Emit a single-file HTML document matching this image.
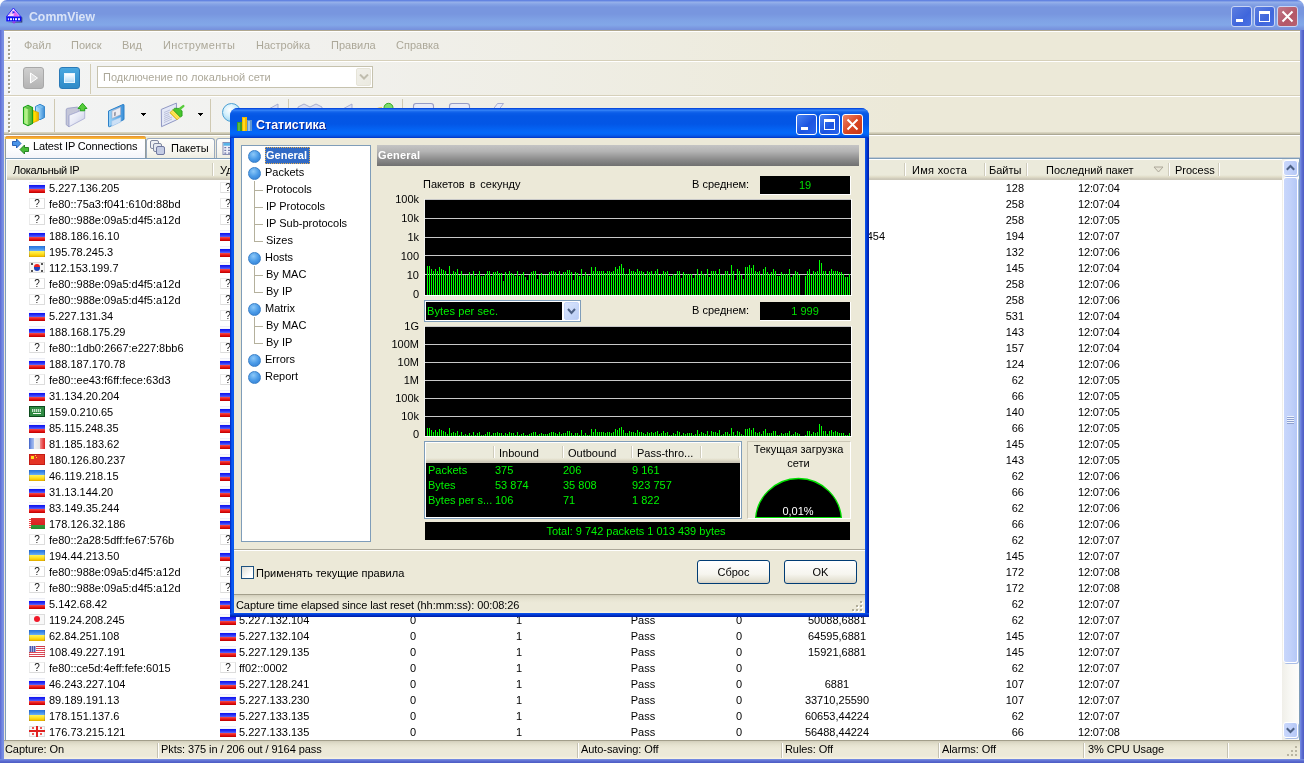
<!DOCTYPE html>
<html><head><meta charset="utf-8"><title>CommView</title>
<style>
*{box-sizing:border-box;margin:0;padding:0}
html,body{width:1304px;height:763px;overflow:hidden}
body{background:#fff;font-family:"Liberation Sans",sans-serif;font-size:11px;color:#000;position:relative}
.a{position:absolute}
i{font-style:normal}
/* main window */
#mtitle{left:0;top:0;width:1304px;height:30px;border-radius:7px 7px 0 0;background:linear-gradient(#5c7ee0 0,#6a8ae2 1px,#98b2ea 2px,#86a4e6 4px,#7896df 7px,#7896df 14px,#7fa2e5 20px,#82a7e8 25px,#7b97e0 28px,#7590dc 30px)}
#mbl{left:0;top:30px;width:4px;height:733px;background:linear-gradient(90deg,#5a68d2 0,#6476d8 1px,#7488e0 2px,#7b92e4 4px)}
#mbr{left:1300px;top:30px;width:4px;height:733px;background:linear-gradient(90deg,#7890e4 0,#6c80dc 1px,#5c6cd0 2px,#4c5cc4 4px)}
#mbb{left:0;top:759px;width:1304px;height:4px;background:linear-gradient(#7890e4 0,#6c80dc 1px,#5c6cd0 2px,#4c5cc4 4px)}
#mtext{left:29px;top:10px;font-weight:bold;font-size:13.5px;line-height:14px;color:#d9e3f7;transform:scaleX(.91);transform-origin:0 0;white-space:nowrap}
.wb{width:21px;height:21px;border-radius:3px;border:1px solid #c9d5f4}
.row{position:absolute;left:0;width:1281px;height:16px}
.row span{position:absolute;white-space:nowrap}
.row .t{top:1px;line-height:14px}
.row .c{text-align:center}
.row .r{text-align:right}
.f{display:block;position:relative;width:16px;height:11px;overflow:hidden}
.f b{display:block}
.f.q{background:#fff;border:1px solid #ebebeb;border-right-color:#dcdcdc;border-bottom-color:#dcdcdc;font-size:10px;line-height:9px;text-align:center;color:#111}
.g{color:#00f400}
.hd{position:absolute;top:164px;white-space:nowrap}
.hs{position:absolute;top:163px;width:2px;height:13px;border-left:1px solid #cfccbc;border-right:1px solid #fff}
.sb{position:absolute;top:743px;white-space:nowrap;letter-spacing:-.08px}
.ss{position:absolute;top:743px;width:2px;height:15px;border-left:1px solid #c5c2b2;border-right:1px solid #fff}
.mi{position:absolute;top:39px;color:#aca899;white-space:nowrap}
.ti{position:absolute;white-space:nowrap;line-height:13px}
.yl{position:absolute;width:40px;left:379px;text-align:right;line-height:12px}
.ball{width:13px;height:13px;border-radius:7px;border:1px solid #3a80c8;background:radial-gradient(circle at 40% 30%,#8cc8f8 0,#4c9ce8 50%,#2c78d0 100%)}
.btn{border:1px solid #003c74;border-radius:3px;background:linear-gradient(#fff 0,#f6f5ef 60%,#e4e1d2 90%,#d6d0c5 100%);text-align:center;line-height:22px}
.sbn{width:15px;border-radius:3px;border:1px solid #fff;box-shadow:1px 1px 0 #a9bde6;background:linear-gradient(90deg,#c9d7fb,#c1d1fa 50%,#b5c8f6)}
#w{position:absolute;left:0;top:0;width:1304px;height:763px;overflow:hidden;will-change:transform}
</style></head><body><div id="w">

<!-- ===== main window chrome ===== -->
<div class="a" style="left:4px;top:30px;width:1296px;height:729px;background:#ece9d8"></div>
<div class="a" id="mtitle"></div>
<div class="a" id="mbl"></div><div class="a" id="mbr"></div><div class="a" id="mbb"></div>
<div class="a" id="mtext">CommView</div>
<svg class="a" style="left:5px;top:7px" width="18" height="18" viewBox="0 0 18 18"><path d="M2.300 15.400h15v-5l-1-1v5.200z" fill="#101030" opacity=".7"/><path d="M8.400 1L1.300 9.800h14.700z" fill="#f6d8fa" stroke="#2424f4" stroke-width="1"/><path d="M9 3l5.500 6.600H8.500z" fill="#e468f2"/><path d="M4 8q2-3 5-1.500" stroke="#e0a0f0" stroke-width="1" fill="none"/><path d="M7.500 3.800l2.500 1.400-2.500 1.600z" fill="#2424f4"/><rect x="1.300" y="9.800" width="15.100" height="4.600" fill="#0c0cf4"/><g fill="#eef"><rect x="2.900" y="11.200" width="1" height="2"/><rect x="5" y="11.200" width="2" height="2"/><rect x="8" y="11.200" width="1" height="2"/><rect x="10" y="11.200" width="2" height="2"/><rect x="13" y="11.200" width="2" height="2"/></g><path d="M6.800 14.400h4.400l-2.200 2.300z" fill="#9a30e8"/></svg>
<div class="a wb" style="left:1231px;top:6px;background:linear-gradient(135deg,#5c7ee0,#3f66dc 60%,#4a72e4)"><div class="a" style="left:4px;top:12px;width:7px;height:3px;background:#fff"></div></div>
<div class="a wb" style="left:1254px;top:6px;background:linear-gradient(135deg,#5c7ee0,#3f66dc 60%,#4a72e4)"><div class="a" style="left:4px;top:4px;width:11px;height:11px;border:1px solid #fff;border-top-width:3px"></div></div>
<div class="a wb" style="left:1277px;top:6px;background:linear-gradient(135deg,#c07888,#b45868 60%,#b86070)"><svg class="a" style="left:3px;top:3px" width="13" height="13"><path d="M1.5 1.5l10 10M11.5 1.5l-10 10" stroke="#fff" stroke-width="2"/></svg></div>

<!-- menu bar -->
<div class="a" style="left:4px;top:30px;width:1296px;height:30px;background:linear-gradient(90deg,#f3f4f4 0,#f1f1ee 300px,#ece9d8 900px)"></div>
<div class="a" style="left:4px;top:30px;width:1296px;height:2px;background:linear-gradient(#b0a890 50%,#fff 50%)"></div>
<div class="a" style="left:4px;top:60px;width:1296px;height:2px;background:linear-gradient(#d6d0ba 50%,#fff 50%)"></div>
<div class="a" style="left:9px;top:38px;width:2px;height:22px;background:repeating-linear-gradient(#fff 0,#fff 2px,transparent 2px,transparent 4px)"></div><div class="a" style="left:8px;top:37px;width:2px;height:22px;background:repeating-linear-gradient(#a39f8b 0,#a39f8b 2px,transparent 2px,transparent 4px)"></div>
<span class="mi" style="left:24px">Файл</span><span class="mi" style="left:71px">Поиск</span><span class="mi" style="left:122px">Вид</span><span class="mi" style="left:163px;letter-spacing:.33px">Инструменты</span><span class="mi" style="left:256px">Настройка</span><span class="mi" style="left:331px">Правила</span><span class="mi" style="left:396px">Справка</span>

<!-- toolbar 1 -->
<div class="a" style="left:4px;top:62px;width:1296px;height:33px;background:linear-gradient(90deg,#f3f4f4 0,#f1f1ee 300px,#ece9d8 900px)"></div>
<div class="a" style="left:4px;top:95px;width:1296px;height:2px;background:linear-gradient(#d6d0ba 50%,#fff 50%)"></div>
<div class="a" style="left:9px;top:68px;width:2px;height:26px;background:repeating-linear-gradient(#fff 0,#fff 2px,transparent 2px,transparent 4px)"></div><div class="a" style="left:8px;top:67px;width:2px;height:26px;background:repeating-linear-gradient(#a39f8b 0,#a39f8b 2px,transparent 2px,transparent 4px)"></div>
<div class="a" style="left:23px;top:67px;width:21px;height:22px;border-radius:3px;border:1px solid #a8a8a8;background:linear-gradient(#cfcfcf,#b4b4b4)"><svg class="a" style="left:5px;top:4px" width="10" height="12"><path d="M1.5 1l7 5-7 5z" fill="#e0e0e0" stroke="#fff" stroke-width="1"/></svg></div>
<div class="a" style="left:59px;top:67px;width:21px;height:22px;border-radius:3px;border:1px solid #2a7ab8;background:linear-gradient(#4aa8e0,#2f8ac8)"><div class="a" style="left:4px;top:5px;width:11px;height:10px;background:linear-gradient(#fff,#b4dcf8);border:1px solid #e8f6ff"></div></div>
<div class="a" style="left:90px;top:64px;width:1px;height:30px;background:#d2ccb4"></div>
<div class="a" style="left:97px;top:66px;width:276px;height:22px;background:#fff;border:1px solid #c6c2ae"></div>
<span class="a" style="left:103px;top:71px;color:#aca899;white-space:nowrap">Подключение по локальной сети</span>
<div class="a" style="left:356px;top:68px;width:15px;height:18px;background:linear-gradient(135deg,#f1f0ea,#ebeae0);border:1px solid #e6e4d8;border-radius:2px"><svg class="a" style="left:2px;top:5px" width="10" height="7"><path d="M1 .5l4 4 4-4" stroke="#c0bdae" stroke-width="2" fill="none"/></svg></div>

<!-- toolbar 2 -->
<div class="a" style="left:4px;top:97px;width:1296px;height:35px;background:linear-gradient(90deg,#f3f4f4 0,#f1f1ee 300px,#ece9d8 900px)"></div>
<div class="a" style="left:4px;top:132px;width:1296px;height:4px;background:linear-gradient(#e0dcc8 0,#d0ccb8 1px,#c4c0aa 2px,#aca894 2px,#aca894 3px,#fff 3px)"></div>
<div class="a" style="left:9px;top:103px;width:2px;height:30px;background:repeating-linear-gradient(#fff 0,#fff 2px,transparent 2px,transparent 4px)"></div><div class="a" style="left:8px;top:102px;width:2px;height:30px;background:repeating-linear-gradient(#a39f8b 0,#a39f8b 2px,transparent 2px,transparent 4px)"></div>
<svg class="a" style="left:22px;top:103px" width="24" height="25" viewBox="0 0 24 25"><defs><linearGradient id="gg" x1="0" x2="1"><stop offset="0" stop-color="#a4ec78"/><stop offset=".42" stop-color="#b8f490"/><stop offset=".5" stop-color="#78cc54"/><stop offset="1" stop-color="#4cb038"/></linearGradient><linearGradient id="gb" x1="0" x2="1"><stop offset="0" stop-color="#b4e0fc"/><stop offset=".45" stop-color="#8cc8f4"/><stop offset="1" stop-color="#3c8cd4"/></linearGradient><linearGradient id="gy" x1="0" x2="1"><stop offset="0" stop-color="#fff000"/><stop offset=".4" stop-color="#ffd800"/><stop offset="1" stop-color="#e8a800"/></linearGradient></defs><path d="M13.500 3.500L18 1.300l4.500 2.200v11L18 16.700l-4.500-2.200z" fill="url(#gb)" stroke="#3888cc" stroke-width="1"/><path d="M14.500 4L18 5.500l3.500-1.500L18 2.300z" fill="#7cc0f0"/><path d="M11 7.500l5.500 2v8L11 19.700z" fill="url(#gy)" stroke="#e0a000" stroke-width=".8"/><path d="M1.500 4.500L6 2.300l4.500 2.200v16L6 22.700l-4.500-2.200z" fill="url(#gg)" stroke="#18a018" stroke-width="1.100"/><path d="M2.500 4.800L6 6.300l3.500-1.500L6 3.300z" fill="#5cc044"/></svg>
<div class="a" style="left:54px;top:99px;width:1px;height:33px;background:#cfc9b2"></div>
<svg class="a" style="left:65px;top:102px" width="24" height="27" viewBox="0 0 24 27"><defs><linearGradient id="gf" x1="0" y1="0" x2="1" y2="1"><stop offset="0" stop-color="#fdfdff"/><stop offset=".5" stop-color="#e8eaf6"/><stop offset="1" stop-color="#c0c4e0"/></linearGradient></defs><path d="M1.200 8Q1.200 6.500 2.700 6.300L12.300 5.100 14 6.500v3L4.100 13.300v11.600L1.200 22.700z" fill="#c4c6d8" stroke="#9ca0c6" stroke-width=".9"/><path d="M4.100 13.300L19.700 7.100v9.300L4.100 24.700z" fill="url(#gf)" stroke="#a6aad0" stroke-width=".8"/><path d="M17.500 1.200L22 6.500h-2.300v2.300h-4.400V6.500H13z" fill="#58cc3c" stroke="#18a010" stroke-width=".9"/></svg>
<svg class="a" style="left:107px;top:103px" width="19" height="25" viewBox="0 0 19 25"><defs><linearGradient id="gl" x1="0" x2="1"><stop offset="0" stop-color="#9cd4f8"/><stop offset=".5" stop-color="#6cb4ec"/><stop offset="1" stop-color="#3c90d8"/></linearGradient></defs><path d="M1.500 8L16 1.500Q17 1.200 17 2.200v14.300L2.500 23.700Q1.500 24 1.500 23z" fill="url(#gl)" stroke="#2c80c8" stroke-width="1"/><path d="M5 8l8.500-3.800v7.600L5 15.500z" fill="#ececf2" stroke="#a8a8c0" stroke-width=".6"/><path d="M7 9.500l1.800-.8v3.800L7 13.300z" fill="#9a9aa8"/><path d="M4.700 18l9.100-3.800V19l-9.100 4.300z" fill="#cce0f6" stroke="#9cc0e8" stroke-width=".5"/></svg>
<svg class="a" style="left:141px;top:113px" width="5" height="3" shape-rendering="crispEdges"><rect x="0" y="0" width="5" height="1"/><rect x="1" y="1" width="3" height="1"/><rect x="2" y="2" width="1" height="1"/></svg>
<svg class="a" style="left:160px;top:102px" width="26" height="26" viewBox="0 0 26 26"><path d="M1.300 7.400L16.400 1.100l.3 16.700L1.500 24.700z" fill="#e4e8f6" stroke="#9098c4" stroke-width="1"/><path d="M4 10.500l6-2.500M4 12.500l5-2M4 14.500l5-2M4 16.500l6-2.500M4 18.500l8-3.500M4 20.500l8-3.500" stroke="#b0b6d4" stroke-width=".8"/><path d="M9.800 10.700l3.300-3 7.200 7.400-3.300 2.700z" fill="#f8d830" stroke="#d0a010" stroke-width=".7"/><path d="M11.200 9.800l6.800 7M12.400 8.800l6.800 7" stroke="#fff8b0" stroke-width=".6"/><path d="M13.100 7.700l1.500-1.500 5.100.3 2.400 2.400v5.100l-1.800 1.100z" fill="#48c42c" stroke="#189810" stroke-width=".7"/><path d="M20.300 6.500l3-2.400" stroke="#58cc3c" stroke-width="2.400" stroke-linecap="round"/></svg>
<svg class="a" style="left:198px;top:113px" width="5" height="3" shape-rendering="crispEdges"><rect x="0" y="0" width="5" height="1"/><rect x="1" y="1" width="3" height="1"/><rect x="2" y="2" width="1" height="1"/></svg>
<div class="a" style="left:210px;top:99px;width:1px;height:33px;background:#cfc9b2"></div>
<div class="a" style="left:222px;top:103px;width:19px;height:19px;border-radius:10px;border:1.500px solid #4ca0d4;background:radial-gradient(circle at 40% 35%,#fff 0,#d4f0fc 40%,#7cc4ec 100%)"></div>
<svg class="a" style="left:262px;top:102px" width="250" height="10" viewBox="0 0 250 10"><g fill="#dcdff0" stroke="#a2a8cc" stroke-width=".9"><path d="M3 9l13-7v7z"/><path d="M36 5l6-3 6 3 6-3 6 3v5h-24z"/><path d="M77 9l13-7v7z"/><rect x="151.500" y="1.500" width="20" height="10" rx="2.500" fill="#e8eaf6" stroke="#969cc6" stroke-width="1.100"/><rect x="187.500" y="1.500" width="20" height="10" rx="2.500" fill="#e8eaf6" stroke="#969cc6" stroke-width="1.100"/><path d="M229.500 9.500l6-8h6l-6 8z" fill="#e8eaf6" stroke="#a0a6cc"/></g><circle cx="126.500" cy="5.800" r="4.500" fill="#7cdc6c" stroke="#38a828"/><path d="M110 10q4-5 10-5v5z" fill="#f0d060"/></svg>
<div class="a" style="left:288px;top:99px;width:1px;height:10px;background:#cfc9b2"></div>
<div class="a" style="left:402px;top:99px;width:1px;height:10px;background:#cfc9b2"></div>


<!-- tabs -->
<div class="a" style="left:5px;top:136px;width:141px;height:22px;background:linear-gradient(#fff,#fcfcfe 60%,#f4f4fa);border:1px solid #919b9c;border-bottom:none;border-radius:3px 3px 0 0"></div>
<div class="a" style="left:5px;top:136px;width:141px;height:3px;border-radius:3px 3px 0 0;background:linear-gradient(#e68b2c,#ffc73c)"></div>
<svg class="a" style="left:11px;top:138px" width="19" height="17" viewBox="0 0 19 17"><path d="M1.500 3.500h4v-2.500l4.500 4.500-4.500 4.500v-2.500h-4z" fill="#4a94e8" stroke="#1c56b0" stroke-width=".9"/><path d="M17.500 9.500h-4v-2.500l-4.500 4.500 4.500 4.500v-2.500h4z" fill="#48bc38" stroke="#1c7c18" stroke-width=".9"/></svg>
<span class="a" style="left:33px;top:140px;white-space:nowrap;letter-spacing:-.15px">Latest IP Connections</span>
<div class="a" style="left:146px;top:138px;width:69px;height:20px;background:linear-gradient(#fdfdfb,#f6f5ee 70%,#eeede2);border:1px solid #9aaabf;border-bottom:none;border-radius:3px 3px 0 0"></div>
<svg class="a" style="left:150px;top:140px" width="16" height="16" viewBox="0 0 16 16"><rect x=".5" y=".5" width="8" height="8" rx="1.5" fill="#eef0f4" stroke="#8088a0"/><rect x="3.5" y="3.5" width="8" height="8" rx="1.5" fill="#e4e8f0" stroke="#8088a0"/><rect x="6.5" y="6.5" width="8" height="8" rx="1.5" fill="#c4cce4" stroke="#7078a0"/></svg>
<span class="a" style="left:171px;top:142px;white-space:nowrap">Пакеты</span>
<div class="a" style="left:216px;top:138px;width:69px;height:20px;background:linear-gradient(#fdfdfb,#f6f5ee 70%,#eeede2);border:1px solid #9aaabf;border-bottom:none;border-radius:3px 3px 0 0"></div>
<svg class="a" style="left:222px;top:142px" width="14" height="13" viewBox="0 0 14 14"><rect x=".5" y=".5" width="13" height="13" fill="#eceef8" stroke="#8088b0"/><rect x="1" y="1" width="12" height="3" fill="#58b4e8"/><path d="M2 6h2M6 6h2M10 6h2M2 9h2M6 9h2M10 9h2M2 12h2M6 12h2" stroke="#7078a8" stroke-width="1.4"/></svg>


<!-- list -->
<div class="a" style="left:285px;top:157px;width:1015px;height:1px;background:#c2cad0"></div>
<div class="a" style="left:5px;top:158px;width:1295px;height:583px;background:#fff;border:1px solid #7f9db9"></div>
<div class="a" style="left:7px;top:160px;width:1275px;height:20px;background:linear-gradient(#ebeadb 0,#ebeadb 15px,#e0dcc8 17px,#cbc7b8 19px,#cbc7b8 20px)"></div>
<span class="hd" style="left:13px;letter-spacing:-.33px">Локальный IP</span><i class="hs" style="left:212px"></i>
<span class="hd" style="left:220px">Удаленный IP</span>
<i class="hs" style="left:904px"></i><span class="hd" style="left:912px;letter-spacing:.3px">Имя хоста</span>
<i class="hs" style="left:984px"></i><span class="hd" style="left:989px">Байты</span>
<i class="hs" style="left:1026px"></i><span class="hd" style="left:1046px">Последний пакет</span>
<svg class="a" style="left:1153px;top:166px" width="11" height="7"><path d="M1 1h9l-4.5 5z" fill="#e6e3d4" stroke="#aca899"/></svg>
<i class="hs" style="left:1168px"></i><span class="hd" style="left:1175px">Process</span><i class="hs" style="left:1218px"></i>
<div class="row" style="top:180px"><span style="left:29px;top:2px"><i class="f" style="background:linear-gradient(#dfe2f0 0,#fdfdff 1px,#f2f2fa 3px,#0c10f0 3px,#2830f4 5px,#5c66f8 7px,#f25050 7px,#e81818 9px,#d80808 10px,#b80000 11px)"></i></span><span class="t" style="left:49px">5.227.136.205</span><span style="left:220px;top:2px"><i class="f q">?</i></span><span class="t r" style="left:984px;width:40px">128</span><span class="t" style="left:1078px;letter-spacing:-.15px">12:07:04</span></div>
<div class="row" style="top:196px"><span style="left:29px;top:2px"><i class="f q">?</i></span><span class="t" style="left:49px">fe80::75a3:f041:610d:88bd</span><span style="left:220px;top:2px"><i class="f q">?</i></span><span class="t r" style="left:984px;width:40px">258</span><span class="t" style="left:1078px;letter-spacing:-.15px">12:07:04</span></div>
<div class="row" style="top:212px"><span style="left:29px;top:2px"><i class="f q">?</i></span><span class="t" style="left:49px">fe80::988e:09a5:d4f5:a12d</span><span style="left:220px;top:2px"><i class="f q">?</i></span><span class="t r" style="left:984px;width:40px">258</span><span class="t" style="left:1078px;letter-spacing:-.15px">12:07:05</span></div>
<div class="row" style="top:228px"><span style="left:29px;top:2px"><i class="f" style="background:linear-gradient(#dfe2f0 0,#fdfdff 1px,#f2f2fa 3px,#0c10f0 3px,#2830f4 5px,#5c66f8 7px,#f25050 7px,#e81818 9px,#d80808 10px,#b80000 11px)"></i></span><span class="t" style="left:49px">188.186.16.10</span><span style="left:220px;top:2px"><i class="f" style="background:linear-gradient(#dfe2f0 0,#fdfdff 1px,#f2f2fa 3px,#0c10f0 3px,#2830f4 5px,#5c66f8 7px,#f25050 7px,#e81818 9px,#d80808 10px,#b80000 11px)"></i></span><span class="t r" style="left:984px;width:40px">194</span><span class="t" style="left:1078px;letter-spacing:-.15px">12:07:07</span><span class="t r" style="left:765px;width:120px">6881,50321,61454</span></div>
<div class="row" style="top:244px"><span style="left:29px;top:2px"><i class="f" style="background:linear-gradient(#2a74dc 0,#3a88e8 2px,#6cb0f4 5px,#fff460 5px,#ffe020 8px,#f4c400 10px,#d8a400 11px);box-shadow:inset 1px 0 0 rgba(0,0,80,.15),inset -1px 0 0 rgba(0,0,80,.15)"></i></span><span class="t" style="left:49px">195.78.245.3</span><span style="left:220px;top:2px"><i class="f" style="background:linear-gradient(#dfe2f0 0,#fdfdff 1px,#f2f2fa 3px,#0c10f0 3px,#2830f4 5px,#5c66f8 7px,#f25050 7px,#e81818 9px,#d80808 10px,#b80000 11px)"></i></span><span class="t r" style="left:984px;width:40px">132</span><span class="t" style="left:1078px;letter-spacing:-.15px">12:07:06</span></div>
<div class="row" style="top:260px"><span style="left:29px;top:2px"><i class="f" style="background:#f6f6f6;box-shadow:inset 0 0 0 1px #dcdcdc"><b style="position:absolute;left:5px;top:2px;width:6px;height:7px;border-radius:3px;background:linear-gradient(#e22 50%,#24b 50%)"></b><b style="position:absolute;left:2px;top:1px;width:2px;height:2px;background:#555"></b><b style="position:absolute;left:12px;top:1px;width:2px;height:2px;background:#555"></b><b style="position:absolute;left:2px;top:8px;width:2px;height:2px;background:#555"></b><b style="position:absolute;left:12px;top:8px;width:2px;height:2px;background:#555"></b></i></span><span class="t" style="left:49px">112.153.199.7</span><span style="left:220px;top:2px"><i class="f" style="background:linear-gradient(#dfe2f0 0,#fdfdff 1px,#f2f2fa 3px,#0c10f0 3px,#2830f4 5px,#5c66f8 7px,#f25050 7px,#e81818 9px,#d80808 10px,#b80000 11px)"></i></span><span class="t r" style="left:984px;width:40px">145</span><span class="t" style="left:1078px;letter-spacing:-.15px">12:07:04</span></div>
<div class="row" style="top:276px"><span style="left:29px;top:2px"><i class="f q">?</i></span><span class="t" style="left:49px">fe80::988e:09a5:d4f5:a12d</span><span style="left:220px;top:2px"><i class="f q">?</i></span><span class="t r" style="left:984px;width:40px">258</span><span class="t" style="left:1078px;letter-spacing:-.15px">12:07:06</span></div>
<div class="row" style="top:292px"><span style="left:29px;top:2px"><i class="f q">?</i></span><span class="t" style="left:49px">fe80::988e:09a5:d4f5:a12d</span><span style="left:220px;top:2px"><i class="f q">?</i></span><span class="t r" style="left:984px;width:40px">258</span><span class="t" style="left:1078px;letter-spacing:-.15px">12:07:06</span></div>
<div class="row" style="top:308px"><span style="left:29px;top:2px"><i class="f" style="background:linear-gradient(#dfe2f0 0,#fdfdff 1px,#f2f2fa 3px,#0c10f0 3px,#2830f4 5px,#5c66f8 7px,#f25050 7px,#e81818 9px,#d80808 10px,#b80000 11px)"></i></span><span class="t" style="left:49px">5.227.131.34</span><span style="left:220px;top:2px"><i class="f q">?</i></span><span class="t r" style="left:984px;width:40px">531</span><span class="t" style="left:1078px;letter-spacing:-.15px">12:07:04</span></div>
<div class="row" style="top:324px"><span style="left:29px;top:2px"><i class="f" style="background:linear-gradient(#dfe2f0 0,#fdfdff 1px,#f2f2fa 3px,#0c10f0 3px,#2830f4 5px,#5c66f8 7px,#f25050 7px,#e81818 9px,#d80808 10px,#b80000 11px)"></i></span><span class="t" style="left:49px">188.168.175.29</span><span style="left:220px;top:2px"><i class="f" style="background:linear-gradient(#dfe2f0 0,#fdfdff 1px,#f2f2fa 3px,#0c10f0 3px,#2830f4 5px,#5c66f8 7px,#f25050 7px,#e81818 9px,#d80808 10px,#b80000 11px)"></i></span><span class="t r" style="left:984px;width:40px">143</span><span class="t" style="left:1078px;letter-spacing:-.15px">12:07:04</span></div>
<div class="row" style="top:340px"><span style="left:29px;top:2px"><i class="f q">?</i></span><span class="t" style="left:49px">fe80::1db0:2667:e227:8bb6</span><span style="left:220px;top:2px"><i class="f q">?</i></span><span class="t r" style="left:984px;width:40px">157</span><span class="t" style="left:1078px;letter-spacing:-.15px">12:07:04</span></div>
<div class="row" style="top:356px"><span style="left:29px;top:2px"><i class="f" style="background:linear-gradient(#dfe2f0 0,#fdfdff 1px,#f2f2fa 3px,#0c10f0 3px,#2830f4 5px,#5c66f8 7px,#f25050 7px,#e81818 9px,#d80808 10px,#b80000 11px)"></i></span><span class="t" style="left:49px">188.187.170.78</span><span style="left:220px;top:2px"><i class="f" style="background:linear-gradient(#dfe2f0 0,#fdfdff 1px,#f2f2fa 3px,#0c10f0 3px,#2830f4 5px,#5c66f8 7px,#f25050 7px,#e81818 9px,#d80808 10px,#b80000 11px)"></i></span><span class="t r" style="left:984px;width:40px">124</span><span class="t" style="left:1078px;letter-spacing:-.15px">12:07:06</span></div>
<div class="row" style="top:372px"><span style="left:29px;top:2px"><i class="f q">?</i></span><span class="t" style="left:49px">fe80::ee43:f6ff:fece:63d3</span><span style="left:220px;top:2px"><i class="f q">?</i></span><span class="t r" style="left:984px;width:40px">62</span><span class="t" style="left:1078px;letter-spacing:-.15px">12:07:05</span></div>
<div class="row" style="top:388px"><span style="left:29px;top:2px"><i class="f" style="background:linear-gradient(#dfe2f0 0,#fdfdff 1px,#f2f2fa 3px,#0c10f0 3px,#2830f4 5px,#5c66f8 7px,#f25050 7px,#e81818 9px,#d80808 10px,#b80000 11px)"></i></span><span class="t" style="left:49px">31.134.20.204</span><span style="left:220px;top:2px"><i class="f" style="background:linear-gradient(#dfe2f0 0,#fdfdff 1px,#f2f2fa 3px,#0c10f0 3px,#2830f4 5px,#5c66f8 7px,#f25050 7px,#e81818 9px,#d80808 10px,#b80000 11px)"></i></span><span class="t r" style="left:984px;width:40px">66</span><span class="t" style="left:1078px;letter-spacing:-.15px">12:07:05</span></div>
<div class="row" style="top:404px"><span style="left:29px;top:2px"><i class="f" style="background:#2f8a42;box-shadow:inset 0 0 0 1px #0c4a1c"><b style="position:absolute;left:3px;top:3px;width:9px;height:3px;background:repeating-linear-gradient(90deg,#d4ecd8 0,#d4ecd8 1px,#6aaa78 1px,#6aaa78 2px);opacity:.9"></b><b style="position:absolute;left:4px;top:7px;width:8px;height:1px;background:#f0f8f0"></b></i></span><span class="t" style="left:49px">159.0.210.65</span><span style="left:220px;top:2px"><i class="f" style="background:linear-gradient(#dfe2f0 0,#fdfdff 1px,#f2f2fa 3px,#0c10f0 3px,#2830f4 5px,#5c66f8 7px,#f25050 7px,#e81818 9px,#d80808 10px,#b80000 11px)"></i></span><span class="t r" style="left:984px;width:40px">140</span><span class="t" style="left:1078px;letter-spacing:-.15px">12:07:05</span></div>
<div class="row" style="top:420px"><span style="left:29px;top:2px"><i class="f" style="background:linear-gradient(#dfe2f0 0,#fdfdff 1px,#f2f2fa 3px,#0c10f0 3px,#2830f4 5px,#5c66f8 7px,#f25050 7px,#e81818 9px,#d80808 10px,#b80000 11px)"></i></span><span class="t" style="left:49px">85.115.248.35</span><span style="left:220px;top:2px"><i class="f" style="background:linear-gradient(#dfe2f0 0,#fdfdff 1px,#f2f2fa 3px,#0c10f0 3px,#2830f4 5px,#5c66f8 7px,#f25050 7px,#e81818 9px,#d80808 10px,#b80000 11px)"></i></span><span class="t r" style="left:984px;width:40px">66</span><span class="t" style="left:1078px;letter-spacing:-.15px">12:07:05</span></div>
<div class="row" style="top:436px"><span style="left:29px;top:2px"><i class="f" style="background:linear-gradient(90deg,#3a5cc4 0,#7c9ce4 2px,#a8c0f0 5px,#f0f0f0 5px,#e2e2e2 11px,#f09090 11px,#e84848 14px,#d82020 16px)"></i></span><span class="t" style="left:49px">81.185.183.62</span><span style="left:220px;top:2px"><i class="f" style="background:linear-gradient(#dfe2f0 0,#fdfdff 1px,#f2f2fa 3px,#0c10f0 3px,#2830f4 5px,#5c66f8 7px,#f25050 7px,#e81818 9px,#d80808 10px,#b80000 11px)"></i></span><span class="t r" style="left:984px;width:40px">145</span><span class="t" style="left:1078px;letter-spacing:-.15px">12:07:05</span></div>
<div class="row" style="top:452px"><span style="left:29px;top:2px"><i class="f" style="background:#e43424;box-shadow:inset 0 0 0 1px #c41c14"><b style="position:absolute;left:2px;top:2px;width:3px;height:3px;background:#ffe020"></b><b style="position:absolute;left:6px;top:1px;width:1px;height:1px;background:#ffe020"></b><b style="position:absolute;left:7px;top:3px;width:1px;height:1px;background:#ffe020"></b></i></span><span class="t" style="left:49px">180.126.80.237</span><span style="left:220px;top:2px"><i class="f" style="background:linear-gradient(#dfe2f0 0,#fdfdff 1px,#f2f2fa 3px,#0c10f0 3px,#2830f4 5px,#5c66f8 7px,#f25050 7px,#e81818 9px,#d80808 10px,#b80000 11px)"></i></span><span class="t r" style="left:984px;width:40px">143</span><span class="t" style="left:1078px;letter-spacing:-.15px">12:07:05</span></div>
<div class="row" style="top:468px"><span style="left:29px;top:2px"><i class="f" style="background:linear-gradient(#2a74dc 0,#3a88e8 2px,#6cb0f4 5px,#fff460 5px,#ffe020 8px,#f4c400 10px,#d8a400 11px);box-shadow:inset 1px 0 0 rgba(0,0,80,.15),inset -1px 0 0 rgba(0,0,80,.15)"></i></span><span class="t" style="left:49px">46.119.218.15</span><span style="left:220px;top:2px"><i class="f" style="background:linear-gradient(#dfe2f0 0,#fdfdff 1px,#f2f2fa 3px,#0c10f0 3px,#2830f4 5px,#5c66f8 7px,#f25050 7px,#e81818 9px,#d80808 10px,#b80000 11px)"></i></span><span class="t r" style="left:984px;width:40px">62</span><span class="t" style="left:1078px;letter-spacing:-.15px">12:07:06</span></div>
<div class="row" style="top:484px"><span style="left:29px;top:2px"><i class="f" style="background:linear-gradient(#dfe2f0 0,#fdfdff 1px,#f2f2fa 3px,#0c10f0 3px,#2830f4 5px,#5c66f8 7px,#f25050 7px,#e81818 9px,#d80808 10px,#b80000 11px)"></i></span><span class="t" style="left:49px">31.13.144.20</span><span style="left:220px;top:2px"><i class="f" style="background:linear-gradient(#dfe2f0 0,#fdfdff 1px,#f2f2fa 3px,#0c10f0 3px,#2830f4 5px,#5c66f8 7px,#f25050 7px,#e81818 9px,#d80808 10px,#b80000 11px)"></i></span><span class="t r" style="left:984px;width:40px">66</span><span class="t" style="left:1078px;letter-spacing:-.15px">12:07:06</span></div>
<div class="row" style="top:500px"><span style="left:29px;top:2px"><i class="f" style="background:linear-gradient(#dfe2f0 0,#fdfdff 1px,#f2f2fa 3px,#0c10f0 3px,#2830f4 5px,#5c66f8 7px,#f25050 7px,#e81818 9px,#d80808 10px,#b80000 11px)"></i></span><span class="t" style="left:49px">83.149.35.244</span><span style="left:220px;top:2px"><i class="f" style="background:linear-gradient(#dfe2f0 0,#fdfdff 1px,#f2f2fa 3px,#0c10f0 3px,#2830f4 5px,#5c66f8 7px,#f25050 7px,#e81818 9px,#d80808 10px,#b80000 11px)"></i></span><span class="t r" style="left:984px;width:40px">62</span><span class="t" style="left:1078px;letter-spacing:-.15px">12:07:06</span></div>
<div class="row" style="top:516px"><span style="left:29px;top:2px"><i class="f" style="background:linear-gradient(#e03030 0,#d82020 7px,#2f9a3a 7px,#258a30 11px)"><b style="position:absolute;left:0;top:0;width:2px;height:11px;background:repeating-linear-gradient(#fff 0,#fff 1px,#e44 1px,#e44 2px)"></b></i></span><span class="t" style="left:49px">178.126.32.186</span><span style="left:220px;top:2px"><i class="f" style="background:linear-gradient(#dfe2f0 0,#fdfdff 1px,#f2f2fa 3px,#0c10f0 3px,#2830f4 5px,#5c66f8 7px,#f25050 7px,#e81818 9px,#d80808 10px,#b80000 11px)"></i></span><span class="t r" style="left:984px;width:40px">66</span><span class="t" style="left:1078px;letter-spacing:-.15px">12:07:06</span></div>
<div class="row" style="top:532px"><span style="left:29px;top:2px"><i class="f q">?</i></span><span class="t" style="left:49px">fe80::2a28:5dff:fe67:576b</span><span style="left:220px;top:2px"><i class="f q">?</i></span><span class="t r" style="left:984px;width:40px">62</span><span class="t" style="left:1078px;letter-spacing:-.15px">12:07:07</span></div>
<div class="row" style="top:548px"><span style="left:29px;top:2px"><i class="f" style="background:linear-gradient(#2a74dc 0,#3a88e8 2px,#6cb0f4 5px,#fff460 5px,#ffe020 8px,#f4c400 10px,#d8a400 11px);box-shadow:inset 1px 0 0 rgba(0,0,80,.15),inset -1px 0 0 rgba(0,0,80,.15)"></i></span><span class="t" style="left:49px">194.44.213.50</span><span style="left:220px;top:2px"><i class="f" style="background:linear-gradient(#dfe2f0 0,#fdfdff 1px,#f2f2fa 3px,#0c10f0 3px,#2830f4 5px,#5c66f8 7px,#f25050 7px,#e81818 9px,#d80808 10px,#b80000 11px)"></i></span><span class="t r" style="left:984px;width:40px">145</span><span class="t" style="left:1078px;letter-spacing:-.15px">12:07:07</span></div>
<div class="row" style="top:564px"><span style="left:29px;top:2px"><i class="f q">?</i></span><span class="t" style="left:49px">fe80::988e:09a5:d4f5:a12d</span><span style="left:220px;top:2px"><i class="f q">?</i></span><span class="t r" style="left:984px;width:40px">172</span><span class="t" style="left:1078px;letter-spacing:-.15px">12:07:08</span></div>
<div class="row" style="top:580px"><span style="left:29px;top:2px"><i class="f q">?</i></span><span class="t" style="left:49px">fe80::988e:09a5:d4f5:a12d</span><span style="left:220px;top:2px"><i class="f q">?</i></span><span class="t r" style="left:984px;width:40px">172</span><span class="t" style="left:1078px;letter-spacing:-.15px">12:07:08</span></div>
<div class="row" style="top:596px"><span style="left:29px;top:2px"><i class="f" style="background:linear-gradient(#dfe2f0 0,#fdfdff 1px,#f2f2fa 3px,#0c10f0 3px,#2830f4 5px,#5c66f8 7px,#f25050 7px,#e81818 9px,#d80808 10px,#b80000 11px)"></i></span><span class="t" style="left:49px">5.142.68.42</span><span style="left:220px;top:2px"><i class="f" style="background:linear-gradient(#dfe2f0 0,#fdfdff 1px,#f2f2fa 3px,#0c10f0 3px,#2830f4 5px,#5c66f8 7px,#f25050 7px,#e81818 9px,#d80808 10px,#b80000 11px)"></i></span><span class="t r" style="left:984px;width:40px">62</span><span class="t" style="left:1078px;letter-spacing:-.15px">12:07:07</span></div>
<div class="row" style="top:612px"><span style="left:29px;top:2px"><i class="f" style="background:#f8f8f8;box-shadow:inset 0 0 0 1px #dcdcdc"><b style="position:absolute;left:5px;top:2px;width:6px;height:6px;border-radius:3px;background:#f01828"></b></i></span><span class="t" style="left:49px">119.24.208.245</span><span style="left:220px;top:2px"><i class="f" style="background:linear-gradient(#dfe2f0 0,#fdfdff 1px,#f2f2fa 3px,#0c10f0 3px,#2830f4 5px,#5c66f8 7px,#f25050 7px,#e81818 9px,#d80808 10px,#b80000 11px)"></i></span><span class="t" style="left:239px">5.227.132.104</span><span class="t c" style="left:383px;width:60px">0</span><span class="t c" style="left:489px;width:60px">1</span><span class="t c" style="left:613px;width:60px">Pass</span><span class="t c" style="left:709px;width:60px">0</span><span class="t c" style="left:777px;width:120px">50088,6881</span><span class="t r" style="left:984px;width:40px">62</span><span class="t" style="left:1078px;letter-spacing:-.15px">12:07:07</span></div>
<div class="row" style="top:628px"><span style="left:29px;top:2px"><i class="f" style="background:linear-gradient(#2a74dc 0,#3a88e8 2px,#6cb0f4 5px,#fff460 5px,#ffe020 8px,#f4c400 10px,#d8a400 11px);box-shadow:inset 1px 0 0 rgba(0,0,80,.15),inset -1px 0 0 rgba(0,0,80,.15)"></i></span><span class="t" style="left:49px">62.84.251.108</span><span style="left:220px;top:2px"><i class="f" style="background:linear-gradient(#dfe2f0 0,#fdfdff 1px,#f2f2fa 3px,#0c10f0 3px,#2830f4 5px,#5c66f8 7px,#f25050 7px,#e81818 9px,#d80808 10px,#b80000 11px)"></i></span><span class="t" style="left:239px">5.227.132.104</span><span class="t c" style="left:383px;width:60px">0</span><span class="t c" style="left:489px;width:60px">1</span><span class="t c" style="left:613px;width:60px">Pass</span><span class="t c" style="left:709px;width:60px">0</span><span class="t c" style="left:777px;width:120px">64595,6881</span><span class="t r" style="left:984px;width:40px">145</span><span class="t" style="left:1078px;letter-spacing:-.15px">12:07:07</span></div>
<div class="row" style="top:644px"><span style="left:29px;top:2px"><i class="f" style="background:repeating-linear-gradient(#e04858 0,#e04858 1px,#fff 1px,#fff 2px);box-shadow:inset 0 0 0 1px rgba(120,0,0,.2)"><b style="position:absolute;left:0;top:0;width:7px;height:6px;background:#4858b0;background-image:repeating-linear-gradient(90deg,rgba(255,255,255,.5) 0,rgba(255,255,255,.5) 1px,transparent 1px,transparent 2px)"></b></i></span><span class="t" style="left:49px">108.49.227.191</span><span style="left:220px;top:2px"><i class="f" style="background:linear-gradient(#dfe2f0 0,#fdfdff 1px,#f2f2fa 3px,#0c10f0 3px,#2830f4 5px,#5c66f8 7px,#f25050 7px,#e81818 9px,#d80808 10px,#b80000 11px)"></i></span><span class="t" style="left:239px">5.227.129.135</span><span class="t c" style="left:383px;width:60px">0</span><span class="t c" style="left:489px;width:60px">1</span><span class="t c" style="left:613px;width:60px">Pass</span><span class="t c" style="left:709px;width:60px">0</span><span class="t c" style="left:777px;width:120px">15921,6881</span><span class="t r" style="left:984px;width:40px">145</span><span class="t" style="left:1078px;letter-spacing:-.15px">12:07:07</span></div>
<div class="row" style="top:660px"><span style="left:29px;top:2px"><i class="f q">?</i></span><span class="t" style="left:49px">fe80::ce5d:4eff:fefe:6015</span><span style="left:220px;top:2px"><i class="f q">?</i></span><span class="t" style="left:239px">ff02::0002</span><span class="t c" style="left:383px;width:60px">0</span><span class="t c" style="left:489px;width:60px">1</span><span class="t c" style="left:613px;width:60px">Pass</span><span class="t c" style="left:709px;width:60px">0</span><span class="t c" style="left:777px;width:120px"></span><span class="t r" style="left:984px;width:40px">62</span><span class="t" style="left:1078px;letter-spacing:-.15px">12:07:07</span></div>
<div class="row" style="top:676px"><span style="left:29px;top:2px"><i class="f" style="background:linear-gradient(#dfe2f0 0,#fdfdff 1px,#f2f2fa 3px,#0c10f0 3px,#2830f4 5px,#5c66f8 7px,#f25050 7px,#e81818 9px,#d80808 10px,#b80000 11px)"></i></span><span class="t" style="left:49px">46.243.227.104</span><span style="left:220px;top:2px"><i class="f" style="background:linear-gradient(#dfe2f0 0,#fdfdff 1px,#f2f2fa 3px,#0c10f0 3px,#2830f4 5px,#5c66f8 7px,#f25050 7px,#e81818 9px,#d80808 10px,#b80000 11px)"></i></span><span class="t" style="left:239px">5.227.128.241</span><span class="t c" style="left:383px;width:60px">0</span><span class="t c" style="left:489px;width:60px">1</span><span class="t c" style="left:613px;width:60px">Pass</span><span class="t c" style="left:709px;width:60px">0</span><span class="t c" style="left:777px;width:120px">6881</span><span class="t r" style="left:984px;width:40px">107</span><span class="t" style="left:1078px;letter-spacing:-.15px">12:07:07</span></div>
<div class="row" style="top:692px"><span style="left:29px;top:2px"><i class="f" style="background:linear-gradient(#dfe2f0 0,#fdfdff 1px,#f2f2fa 3px,#0c10f0 3px,#2830f4 5px,#5c66f8 7px,#f25050 7px,#e81818 9px,#d80808 10px,#b80000 11px)"></i></span><span class="t" style="left:49px">89.189.191.13</span><span style="left:220px;top:2px"><i class="f" style="background:linear-gradient(#dfe2f0 0,#fdfdff 1px,#f2f2fa 3px,#0c10f0 3px,#2830f4 5px,#5c66f8 7px,#f25050 7px,#e81818 9px,#d80808 10px,#b80000 11px)"></i></span><span class="t" style="left:239px">5.227.133.230</span><span class="t c" style="left:383px;width:60px">0</span><span class="t c" style="left:489px;width:60px">1</span><span class="t c" style="left:613px;width:60px">Pass</span><span class="t c" style="left:709px;width:60px">0</span><span class="t c" style="left:777px;width:120px">33710,25590</span><span class="t r" style="left:984px;width:40px">107</span><span class="t" style="left:1078px;letter-spacing:-.15px">12:07:07</span></div>
<div class="row" style="top:708px"><span style="left:29px;top:2px"><i class="f" style="background:linear-gradient(#2a74dc 0,#3a88e8 2px,#6cb0f4 5px,#fff460 5px,#ffe020 8px,#f4c400 10px,#d8a400 11px);box-shadow:inset 1px 0 0 rgba(0,0,80,.15),inset -1px 0 0 rgba(0,0,80,.15)"></i></span><span class="t" style="left:49px">178.151.137.6</span><span style="left:220px;top:2px"><i class="f" style="background:linear-gradient(#dfe2f0 0,#fdfdff 1px,#f2f2fa 3px,#0c10f0 3px,#2830f4 5px,#5c66f8 7px,#f25050 7px,#e81818 9px,#d80808 10px,#b80000 11px)"></i></span><span class="t" style="left:239px">5.227.133.135</span><span class="t c" style="left:383px;width:60px">0</span><span class="t c" style="left:489px;width:60px">1</span><span class="t c" style="left:613px;width:60px">Pass</span><span class="t c" style="left:709px;width:60px">0</span><span class="t c" style="left:777px;width:120px">60653,44224</span><span class="t r" style="left:984px;width:40px">62</span><span class="t" style="left:1078px;letter-spacing:-.15px">12:07:07</span></div>
<div class="row" style="top:724px"><span style="left:29px;top:2px"><i class="f" style="background:#fafafa;box-shadow:inset 0 0 0 1px #dedede"><b style="position:absolute;left:7px;top:0;width:2px;height:11px;background:#e02020"></b><b style="position:absolute;left:0;top:4px;width:16px;height:2px;background:#e02020"></b><b style="position:absolute;left:3px;top:1px;width:2px;height:2px;background:#e55"></b><b style="position:absolute;left:11px;top:1px;width:2px;height:2px;background:#e55"></b><b style="position:absolute;left:3px;top:7px;width:2px;height:2px;background:#e55"></b><b style="position:absolute;left:11px;top:7px;width:2px;height:2px;background:#e55"></b></i></span><span class="t" style="left:49px">176.73.215.121</span><span style="left:220px;top:2px"><i class="f" style="background:linear-gradient(#dfe2f0 0,#fdfdff 1px,#f2f2fa 3px,#0c10f0 3px,#2830f4 5px,#5c66f8 7px,#f25050 7px,#e81818 9px,#d80808 10px,#b80000 11px)"></i></span><span class="t" style="left:239px">5.227.133.135</span><span class="t c" style="left:383px;width:60px">0</span><span class="t c" style="left:489px;width:60px">1</span><span class="t c" style="left:613px;width:60px">Pass</span><span class="t c" style="left:709px;width:60px">0</span><span class="t c" style="left:777px;width:120px">56488,44224</span><span class="t r" style="left:984px;width:40px">66</span><span class="t" style="left:1078px;letter-spacing:-.15px">12:07:08</span></div>
<!-- scrollbar -->
<div class="a" style="left:1282px;top:159px;width:17px;height:581px;background:linear-gradient(90deg,#f0efe9,#f8f8f4 50%,#fdfdfb)"></div>
<div class="a sbn" style="left:1283px;top:160px;height:16px"><svg class="a" style="left:2px;top:3px" width="9" height="7"><path d="M.8 5.800l3.700-3.800 3.700 3.800" stroke="#4d6185" stroke-width="2" fill="none"/></svg></div>
<div class="a sbn" style="left:1283px;top:722px;height:16px"><svg class="a" style="left:2px;top:4px" width="9" height="7"><path d="M.8 1.200l3.700 3.800 3.700-3.800" stroke="#4d6185" stroke-width="2" fill="none"/></svg></div>
<div class="a sbn" style="left:1283px;top:177px;height:486px"></div>
<div class="a" style="left:1287px;top:416px;width:7px;height:8px;background:repeating-linear-gradient(#eef4fe 0,#eef4fe 1px,#8ea0d0 1px,#8ea0d0 2px)"></div>


<!-- status bar -->
<div class="a" style="left:4px;top:740px;width:1296px;height:19px;background:linear-gradient(#a39f8b 0,#a39f8b 1px,#d2cebb 1px,#dedbc8 3px,#e8e5d3 6px,#ece9d8 9px,#ece9d8 16px,#f4f0de 18px,#f8f4e4 19px)"></div>
<span class="sb" style="left:5px">Capture: On</span><i class="ss" style="left:157px"></i>
<span class="sb" style="left:161px">Pkts: 375 in / 206 out / 9164 pass</span><i class="ss" style="left:577px"></i>
<span class="sb" style="left:581px">Auto-saving: Off</span><i class="ss" style="left:781px"></i>
<span class="sb" style="left:785px">Rules: Off</span><i class="ss" style="left:938px"></i>
<span class="sb" style="left:942px">Alarms: Off</span><i class="ss" style="left:1083px"></i>
<span class="sb" style="left:1088px">3% CPU Usage</span><i class="ss" style="left:1227px"></i>
<svg class="a" style="left:1286px;top:745px" width="13" height="13"><g fill="#b8b4a2"><rect x="9" y="1" width="2" height="2"/><rect x="5" y="5" width="2" height="2"/><rect x="9" y="5" width="2" height="2"/><rect x="1" y="9" width="2" height="2"/><rect x="5" y="9" width="2" height="2"/><rect x="9" y="9" width="2" height="2"/></g></svg>

<!-- ===== dialog ===== -->
<div class="a" id="dlg" style="left:230px;top:108px;width:639px;height:509px;border-radius:8px 8px 0 0;background:#0a52ec"></div>
<div class="a" style="left:230px;top:134px;width:4px;height:483px;background:linear-gradient(90deg,#0020b0,#0440e0 1px,#0a5cf4 2px,#0854ec 4px)"></div>
<div class="a" style="left:865px;top:134px;width:4px;height:483px;background:linear-gradient(90deg,#0a54ec 0,#0648e4 1px,#0034cc 2px,#001ca4 4px)"></div>
<div class="a" style="left:230px;top:613px;width:639px;height:4px;background:linear-gradient(#0a54ec 0,#0648e4 1px,#0034cc 2px,#001ca4 4px)"></div>
<div class="a" style="left:230px;top:108px;width:639px;height:30px;border-radius:8px 8px 0 0;background:linear-gradient(#0846d8 0,#0a50e4 1px,#3e8cfa 2px,#2070f0 3px,#0a5ce8 5px,#0456e4 8px,#0356e6 16px,#0462f2 21px,#0268fa 25px,#0460f0 27px,#0348d8 29px,#0030c0 30px)"></div>
<div class="a" style="left:234px;top:138px;width:631px;height:475px;background:#ece9d8"></div>
<svg class="a" style="left:237px;top:117px" width="16" height="14" viewBox="0 0 16 14"><rect x="0" y="5" width="5" height="9" fill="#3c9c2c"/><rect x="1" y="6" width="2" height="8" fill="#5cbc44"/><rect x="5" y="0" width="5" height="14" fill="#f4b800"/><rect x="6" y="1" width="2" height="13" fill="#ffdc20"/><rect x="10" y="3" width="5" height="11" fill="#5c94cc"/><rect x="11" y="4" width="2" height="10" fill="#9cc4ec"/></svg>
<div class="a" style="left:256px;top:118.400px;font-weight:bold;font-size:13.5px;line-height:14px;color:#fff;text-shadow:1px 1px 0 #0a1c8c;white-space:nowrap;transform:scaleX(.925);transform-origin:0 0">Статистика</div>
<div class="a wb" style="left:796px;top:114px;border-color:#fff;background:linear-gradient(135deg,#4a84f4,#1c54e0 55%,#2a64ec)"><div class="a" style="left:4px;top:12px;width:7px;height:3px;background:#fff"></div></div>
<div class="a wb" style="left:819px;top:114px;border-color:#fff;background:linear-gradient(135deg,#4a84f4,#1c54e0 55%,#2a64ec)"><div class="a" style="left:4px;top:4px;width:11px;height:11px;border:1px solid #fff;border-top-width:3px"></div></div>
<div class="a wb" style="left:842px;top:114px;border-color:#fff;background:linear-gradient(135deg,#ec8468,#d84420 55%,#c83818)"><svg class="a" style="left:3px;top:3px" width="13" height="13"><path d="M1.500 1.500l10 10M11.500 1.500l-10 10" stroke="#fff" stroke-width="2"/></svg></div>

<!-- tree -->
<div class="a" style="left:241px;top:145px;width:130px;height:397px;background:#fff;border:1px solid #7f9db9"></div>
<div class="a" style="left:265px;top:147px;width:45px;height:17px;background:#316ac5;outline:1px dotted #e8b050;outline-offset:-1px"></div>
<span class="ti" style="left:266px;top:149px;color:#fff;font-weight:bold">General</span>
<div class="a ball" style="left:248px;top:150px"></div>
<div class="a ball" style="left:248px;top:167px"></div>
<span class="ti" style="left:265px;top:166px">Packets</span>
<div class="a" style="left:254px;top:181px;width:1px;height:17px;background:#b4b09c"></div>
<div class="a" style="left:254px;top:190px;width:9px;height:1px;background:#b4b09c"></div>
<span class="ti" style="left:266px;top:183px">Protocols</span>
<div class="a" style="left:254px;top:198px;width:1px;height:17px;background:#b4b09c"></div>
<div class="a" style="left:254px;top:207px;width:9px;height:1px;background:#b4b09c"></div>
<span class="ti" style="left:266px;top:200px">IP Protocols</span>
<div class="a" style="left:254px;top:215px;width:1px;height:17px;background:#b4b09c"></div>
<div class="a" style="left:254px;top:224px;width:9px;height:1px;background:#b4b09c"></div>
<span class="ti" style="left:266px;top:217px">IP Sub-protocols</span>
<div class="a" style="left:254px;top:232px;width:1px;height:9px;background:#b4b09c"></div>
<div class="a" style="left:254px;top:241px;width:9px;height:1px;background:#b4b09c"></div>
<span class="ti" style="left:266px;top:234px">Sizes</span>
<div class="a ball" style="left:248px;top:252px"></div>
<span class="ti" style="left:265px;top:251px">Hosts</span>
<div class="a" style="left:254px;top:266px;width:1px;height:17px;background:#b4b09c"></div>
<div class="a" style="left:254px;top:275px;width:9px;height:1px;background:#b4b09c"></div>
<span class="ti" style="left:266px;top:268px">By MAC</span>
<div class="a" style="left:254px;top:283px;width:1px;height:9px;background:#b4b09c"></div>
<div class="a" style="left:254px;top:292px;width:9px;height:1px;background:#b4b09c"></div>
<span class="ti" style="left:266px;top:285px">By IP</span>
<div class="a ball" style="left:248px;top:303px"></div>
<span class="ti" style="left:265px;top:302px">Matrix</span>
<div class="a" style="left:254px;top:317px;width:1px;height:17px;background:#b4b09c"></div>
<div class="a" style="left:254px;top:326px;width:9px;height:1px;background:#b4b09c"></div>
<span class="ti" style="left:266px;top:319px">By MAC</span>
<div class="a" style="left:254px;top:334px;width:1px;height:9px;background:#b4b09c"></div>
<div class="a" style="left:254px;top:343px;width:9px;height:1px;background:#b4b09c"></div>
<span class="ti" style="left:266px;top:336px">By IP</span>
<div class="a ball" style="left:248px;top:354px"></div>
<span class="ti" style="left:265px;top:353px">Errors</span>
<div class="a ball" style="left:248px;top:371px"></div>
<span class="ti" style="left:265px;top:370px">Report</span>

<!-- right pane -->
<div class="a" style="left:377px;top:145px;width:482px;height:21px;background:linear-gradient(#c4c4c4 0,#b4b4b4 30%,#8a8a8a 70%,#707070 100%)"></div>
<span class="ti" style="left:378px;top:149px;color:#fff;font-weight:bold;letter-spacing:.2px">General</span>
<span class="ti" style="left:423px;top:178px;word-spacing:1.9px">Пакетов в секунду</span>
<span class="ti" style="left:692px;top:178px">В среднем:</span>
<div class="a" style="left:760px;top:176px;width:91px;height:19px;box-sizing:border-box;border-right:1px solid #fff;border-bottom:1px solid #fff;background:#000;color:#00e000;text-align:center;line-height:18px">19</div>
<span class="yl" style="top:193px">100k</span><span class="yl" style="top:212px">10k</span><span class="yl" style="top:231px">1k</span><span class="yl" style="top:250px">100</span><span class="yl" style="top:269px">10</span><span class="yl" style="top:288px">0</span>
<div class="a" style="left:424px;top:199px;width:428px;height:97px;background:#000;border-left:1px solid #f4f4f0;border-right:1px solid #fff;border-bottom:1px solid #fff"></div>
<div class="a" style="left:425px;top:199px;width:426px;height:1px;background:#c8c8c8"></div>
<div class="a" style="left:425px;top:218px;width:426px;height:1px;background:#c8c8c8"></div>
<div class="a" style="left:425px;top:237px;width:426px;height:1px;background:#c8c8c8"></div>
<div class="a" style="left:425px;top:255px;width:426px;height:1px;background:#c8c8c8"></div>
<div class="a" style="left:425px;top:274px;width:426px;height:1px;background:#c8c8c8"></div>
<div class="a" style="left:424px;top:300px;width:157px;height:22px;background:#fff;border:1px solid #7f9db9"></div><div class="a" style="left:426px;top:302px;width:136px;height:18px;background:#000"></div>
<span class="ti g" style="left:427px;top:305px;letter-spacing:.1px">Bytes per sec.</span>
<div class="a" style="left:564px;top:302px;width:15px;height:18px;border-radius:2px;border:1px solid #c4d4f8;background:linear-gradient(135deg,#dbe6fd,#b9cdf6)"><svg class="a" style="left:2px;top:5px" width="9" height="7"><path d="M1 1l3.500 4L8 1" stroke="#4d6185" stroke-width="2" fill="none"/></svg></div>
<span class="ti" style="left:692px;top:304px">В среднем:</span>
<div class="a" style="left:760px;top:302px;width:91px;height:19px;box-sizing:border-box;border-right:1px solid #fff;border-bottom:1px solid #fff;background:#000;color:#00e000;text-align:center;line-height:18px">1 999</div>
<span class="yl" style="top:320px">1G</span><span class="yl" style="top:338px">100M</span><span class="yl" style="top:356px">10M</span><span class="yl" style="top:374px">1M</span><span class="yl" style="top:392px">100k</span><span class="yl" style="top:410px">10k</span><span class="yl" style="top:428px">0</span>
<div class="a" style="left:424px;top:326px;width:428px;height:111px;background:#000;border-left:1px solid #f4f4f0;border-right:1px solid #fff;border-bottom:1px solid #fff"></div>
<div class="a" style="left:425px;top:326px;width:426px;height:1px;background:#c8c8c8"></div>
<div class="a" style="left:425px;top:344px;width:426px;height:1px;background:#c8c8c8"></div>
<div class="a" style="left:425px;top:362px;width:426px;height:1px;background:#c8c8c8"></div>
<div class="a" style="left:425px;top:380px;width:426px;height:1px;background:#c8c8c8"></div>
<div class="a" style="left:425px;top:398px;width:426px;height:1px;background:#c8c8c8"></div>
<div class="a" style="left:425px;top:416px;width:426px;height:1px;background:#c8c8c8"></div>
<svg class="a" style="left:0;top:0;pointer-events:none" width="1304" height="763"><path d="M427.5 295v-29M429.5 295v-29M431.5 295v-26M433.5 295v-24M435.5 295v-26M437.5 295v-24M439.5 295v-28M441.5 295v-26M443.5 295v-25M445.5 295v-24M447.5 295v-20M449.5 295v-29M451.5 295v-21M453.5 295v-24M455.5 295v-23M457.5 295v-26M459.5 295v-20M461.5 295v-24M463.5 295v-20M465.5 295v-20M467.5 295v-20M469.5 295v-23M471.5 295v-20M473.5 295v-24M475.5 295v-19M477.5 295v-21M479.5 295v-24M481.5 295v-19M483.5 295v-19M485.5 295v-21M487.5 295v-24M489.5 295v-24M491.5 295v-19M493.5 295v-23M495.5 295v-23M497.5 295v-24M499.5 295v-22M501.5 295v-22M503.5 295v-14M505.5 295v-23M507.5 295v-21M509.5 295v-24M511.5 295v-22M513.5 295v-21M515.5 295v-19M517.5 295v-24M519.5 295v-19M521.5 295v-21M523.5 295v-23M525.5 295v-18M527.5 295v-15M529.5 295v-20M531.5 295v-23M533.5 295v-24M535.5 295v-24M537.5 295v-16M539.5 295v-20M541.5 295v-22M543.5 295v-20M545.5 295v-20M547.5 295v-20M549.5 295v-23M551.5 295v-24M553.5 295v-24M555.5 295v-23M557.5 295v-20M559.5 295v-24M561.5 295v-20M563.5 295v-23M565.5 295v-23M567.5 295v-25M569.5 295v-25M571.5 295v-23M573.5 295v-15M575.5 295v-23M577.5 295v-22M579.5 295v-19M581.5 295v-26M583.5 295v-19M585.5 295v-23M587.5 295v-20M589.5 295v-19M591.5 295v-28M593.5 295v-24M595.5 295v-28M597.5 295v-24M599.5 295v-24M601.5 295v-24M603.5 295v-24M605.5 295v-22M607.5 295v-24M609.5 295v-24M611.5 295v-23M613.5 295v-24M615.5 295v-28M617.5 295v-26M619.5 295v-29M621.5 295v-31M623.5 295v-27M625.5 295v-21M627.5 295v-21M629.5 295v-26M631.5 295v-24M633.5 295v-24M635.5 295v-23M637.5 295v-26M639.5 295v-24M641.5 295v-24M643.5 295v-23M645.5 295v-20M647.5 295v-24M649.5 295v-23M651.5 295v-24M653.5 295v-21M655.5 295v-24M657.5 295v-26M659.5 295v-20M661.5 295v-21M663.5 295v-24M665.5 295v-23M667.5 295v-24M669.5 295v-19M671.5 295v-19M673.5 295v-21M675.5 295v-20M677.5 295v-24M679.5 295v-24M681.5 295v-17M683.5 295v-23M685.5 295v-21M687.5 295v-21M689.5 295v-21M691.5 295v-21M693.5 295v-17M695.5 295v-20M697.5 295v-26M699.5 295v-20M701.5 295v-24M703.5 295v-21M705.5 295v-20M707.5 295v-26M709.5 295v-18M711.5 295v-24M713.5 295v-24M715.5 295v-24M717.5 295v-21M719.5 295v-26M721.5 295v-20M723.5 295v-20M725.5 295v-24M727.5 295v-24M729.5 295v-20M731.5 295v-30M733.5 295v-24M735.5 295v-15M737.5 295v-26M739.5 295v-24M741.5 295v-20M743.5 295v-16M745.5 295v-28M747.5 295v-28M749.5 295v-30M751.5 295v-27M753.5 295v-30M755.5 295v-24M757.5 295v-23M759.5 295v-24M761.5 295v-20M763.5 295v-26M765.5 295v-28M767.5 295v-23M769.5 295v-21M771.5 295v-23M773.5 295v-26M775.5 295v-24M777.5 295v-19M779.5 295v-19M781.5 295v-23M783.5 295v-21M785.5 295v-21M787.5 295v-21M789.5 295v-26M791.5 295v-18M793.5 295v-20M795.5 295v-24M797.5 295v-23M799.5 295v-20M805.5 295v-19M807.5 295v-24M809.5 295v-26M811.5 295v-20M813.5 295v-24M815.5 295v-23M817.5 295v-24M819.5 295v-35M821.5 295v-32M823.5 295v-24M825.5 295v-24M827.5 295v-20M829.5 295v-24M831.5 295v-26M833.5 295v-24M835.5 295v-24M837.5 295v-24M839.5 295v-23M841.5 295v-23M843.5 295v-21M845.5 295v-18M847.5 295v-18M849.5 295v-21" stroke="#00ff00" stroke-width="1" shape-rendering="crispEdges"/><path d="M427.5 436v-8M429.5 436v-8M431.5 436v-6M433.5 436v-4M435.5 436v-6M437.5 436v-4M439.5 436v-7M441.5 436v-6M443.5 436v-5M445.5 436v-4M447.5 436v-2M449.5 436v-8M451.5 436v-3M453.5 436v-4M455.5 436v-3M457.5 436v-5M459.5 436v-1M461.5 436v-4M463.5 436v-1M465.5 436v-2M467.5 436v-1M469.5 436v-3M471.5 436v-1M473.5 436v-4M475.5 436v-1M477.5 436v-3M479.5 436v-4M481.5 436v-1M483.5 436v-1M485.5 436v-2M487.5 436v-4M489.5 436v-4M491.5 436v-1M493.5 436v-3M495.5 436v-3M497.5 436v-4M499.5 436v-3M501.5 436v-3M503.5 436v-1M505.5 436v-3M507.5 436v-2M509.5 436v-4M511.5 436v-3M513.5 436v-3M515.5 436v-1M517.5 436v-4M519.5 436v-1M521.5 436v-2M523.5 436v-3M525.5 436v-1M527.5 436v-1M529.5 436v-2M531.5 436v-3M533.5 436v-4M535.5 436v-4M537.5 436v-1M539.5 436v-2M541.5 436v-3M543.5 436v-2M545.5 436v-2M547.5 436v-2M549.5 436v-3M551.5 436v-4M553.5 436v-4M555.5 436v-3M557.5 436v-2M559.5 436v-4M561.5 436v-2M563.5 436v-3M565.5 436v-3M567.5 436v-5M569.5 436v-5M571.5 436v-3M573.5 436v-1M575.5 436v-3M577.5 436v-3M579.5 436v-1M581.5 436v-6M583.5 436v-1M585.5 436v-3M587.5 436v-1M589.5 436v-1M591.5 436v-7M593.5 436v-4M595.5 436v-7M597.5 436v-4M599.5 436v-4M601.5 436v-4M603.5 436v-4M605.5 436v-3M607.5 436v-4M609.5 436v-4M611.5 436v-3M613.5 436v-4M615.5 436v-7M617.5 436v-6M619.5 436v-8M621.5 436v-9M623.5 436v-6M625.5 436v-3M627.5 436v-3M629.5 436v-5M631.5 436v-4M633.5 436v-4M635.5 436v-3M637.5 436v-6M639.5 436v-4M641.5 436v-4M643.5 436v-3M645.5 436v-2M647.5 436v-4M649.5 436v-3M651.5 436v-4M653.5 436v-3M655.5 436v-4M657.5 436v-5M659.5 436v-2M661.5 436v-3M663.5 436v-5M665.5 436v-3M667.5 436v-4M669.5 436v-1M671.5 436v-1M673.5 436v-3M675.5 436v-2M677.5 436v-5M679.5 436v-4M681.5 436v-1M683.5 436v-3M685.5 436v-2M687.5 436v-3M689.5 436v-3M691.5 436v-3M693.5 436v-1M695.5 436v-2M697.5 436v-6M699.5 436v-2M701.5 436v-4M703.5 436v-3M705.5 436v-2M707.5 436v-5M709.5 436v-1M711.5 436v-5M713.5 436v-4M715.5 436v-4M717.5 436v-3M719.5 436v-6M721.5 436v-1M723.5 436v-2M725.5 436v-4M727.5 436v-4M729.5 436v-2M731.5 436v-8M733.5 436v-4M735.5 436v-1M737.5 436v-5M739.5 436v-4M741.5 436v-2M743.5 436v-1M745.5 436v-7M747.5 436v-7M749.5 436v-8M751.5 436v-6M753.5 436v-8M755.5 436v-4M757.5 436v-3M759.5 436v-4M761.5 436v-2M763.5 436v-5M765.5 436v-7M767.5 436v-3M769.5 436v-3M771.5 436v-3M773.5 436v-5M775.5 436v-5M777.5 436v-1M779.5 436v-1M781.5 436v-3M783.5 436v-2M785.5 436v-3M787.5 436v-3M789.5 436v-5M791.5 436v-1M793.5 436v-2M795.5 436v-4M797.5 436v-3M799.5 436v-2M805.5 436v-1M807.5 436v-5M809.5 436v-5M811.5 436v-2M813.5 436v-4M815.5 436v-3M817.5 436v-4M819.5 436v-12M821.5 436v-10M823.5 436v-5M825.5 436v-5M827.5 436v-2M829.5 436v-5M831.5 436v-6M833.5 436v-4M835.5 436v-5M837.5 436v-4M839.5 436v-3M841.5 436v-3M843.5 436v-3M845.5 436v-1M847.5 436v-1M849.5 436v-3" stroke="#00ff00" stroke-width="1" shape-rendering="crispEdges"/></svg>

<!-- table -->
<div class="a" style="left:424px;top:441px;width:318px;height:78px;background:#000;border:1px solid #7f9db9;box-shadow:inset 0 0 0 1px #fff"></div>
<div class="a" style="left:426px;top:443px;width:314px;height:20px;background:linear-gradient(#ebeadb 0,#ebeadb 15px,#e0dcc8 17px,#cbc7b8 19px,#cbc7b8 20px)"></div>
<i class="hs" style="left:493px;top:446px;height:12px"></i><i class="hs" style="left:562px;top:446px;height:12px"></i><i class="hs" style="left:631px;top:446px;height:12px"></i><i class="hs" style="left:700px;top:446px;height:12px"></i><i class="hs" style="left:738px;top:446px;height:12px"></i>
<span class="ti" style="left:499px;top:447px">Inbound</span><span class="ti" style="left:568px;top:447px">Outbound</span><span class="ti" style="left:637px;top:447px">Pass-thro...</span>
<span class="ti g" style="left:428px;top:464px">Packets</span><span class="ti g" style="left:495px;top:464px">375</span><span class="ti g" style="left:563px;top:464px">206</span><span class="ti g" style="left:632px;top:464px">9 161</span>
<span class="ti g" style="left:428px;top:479px">Bytes</span><span class="ti g" style="left:495px;top:479px">53 874</span><span class="ti g" style="left:563px;top:479px">35 808</span><span class="ti g" style="left:632px;top:479px">923 757</span>
<span class="ti g" style="left:428px;top:494px">Bytes per s...</span><span class="ti g" style="left:495px;top:494px">106</span><span class="ti g" style="left:563px;top:494px">71</span><span class="ti g" style="left:632px;top:494px">1 822</span>
<div class="a g" style="left:425px;top:522px;width:425px;height:18px;background:#000;padding-right:3px;text-align:center;line-height:18px">Total: 9 742 packets 1 013 439 bytes</div>
<!-- gauge -->
<div class="a" style="left:747px;top:441px;width:104px;height:78px;border:1px solid #cbc7b6;border-right-color:#fff;border-bottom-color:#fff"></div>
<div class="a" style="left:748px;top:442px;width:101px;text-align:center;line-height:14px">Текущая загрузка<br>сети</div>
<svg class="a" style="left:750px;top:474px" width="98" height="44" viewBox="750 474 98 44"><circle cx="798.500" cy="521.500" r="43" fill="#000" stroke="#00e000" stroke-width="1.300"/><path d="M755 517.500h87" stroke="#00e000" stroke-width="1"/></svg>
<span class="ti" style="left:768px;top:505px;width:60px;text-align:center;color:#fff">0,01%</span>

<!-- bottom -->
<div class="a" style="left:234px;top:549px;width:631px;height:2px;background:linear-gradient(#aca899 50%,#fff 50%)"></div>
<div class="a" style="left:241px;top:566px;width:13px;height:13px;background:linear-gradient(135deg,#dcdcd4,#fff 70%);border:1px solid #1c5180"></div>
<span class="ti" style="left:256px;top:567px">Применять текущие правила</span>
<div class="a btn" style="left:697px;top:560px;width:73px;height:24px">Сброс</div>
<div class="a btn" style="left:784px;top:560px;width:73px;height:24px">OK</div>
<div class="a" style="left:234px;top:594px;width:631px;height:19px;background:linear-gradient(#a39f8b 0,#a39f8b 1px,#d2cebb 1px,#dedbc8 3px,#e8e5d3 6px,#ece9d8 9px,#ece9d8 17px,#f6f0dc 18px)"></div>
<span class="ti" style="left:236px;top:599px;letter-spacing:-.08px">Capture time elapsed since last reset (hh:mm:ss): 00:08:26</span>
<svg class="a" style="left:851px;top:600px" width="13" height="13"><g fill="#fff"><rect x="10" y="2" width="2" height="2"/><rect x="6" y="6" width="2" height="2"/><rect x="10" y="6" width="2" height="2"/><rect x="2" y="10" width="2" height="2"/><rect x="6" y="10" width="2" height="2"/><rect x="10" y="10" width="2" height="2"/></g><g fill="#b0ac98"><rect x="9" y="1" width="2" height="2"/><rect x="5" y="5" width="2" height="2"/><rect x="9" y="5" width="2" height="2"/><rect x="1" y="9" width="2" height="2"/><rect x="5" y="9" width="2" height="2"/><rect x="9" y="9" width="2" height="2"/></g></svg>

</div></body></html>
